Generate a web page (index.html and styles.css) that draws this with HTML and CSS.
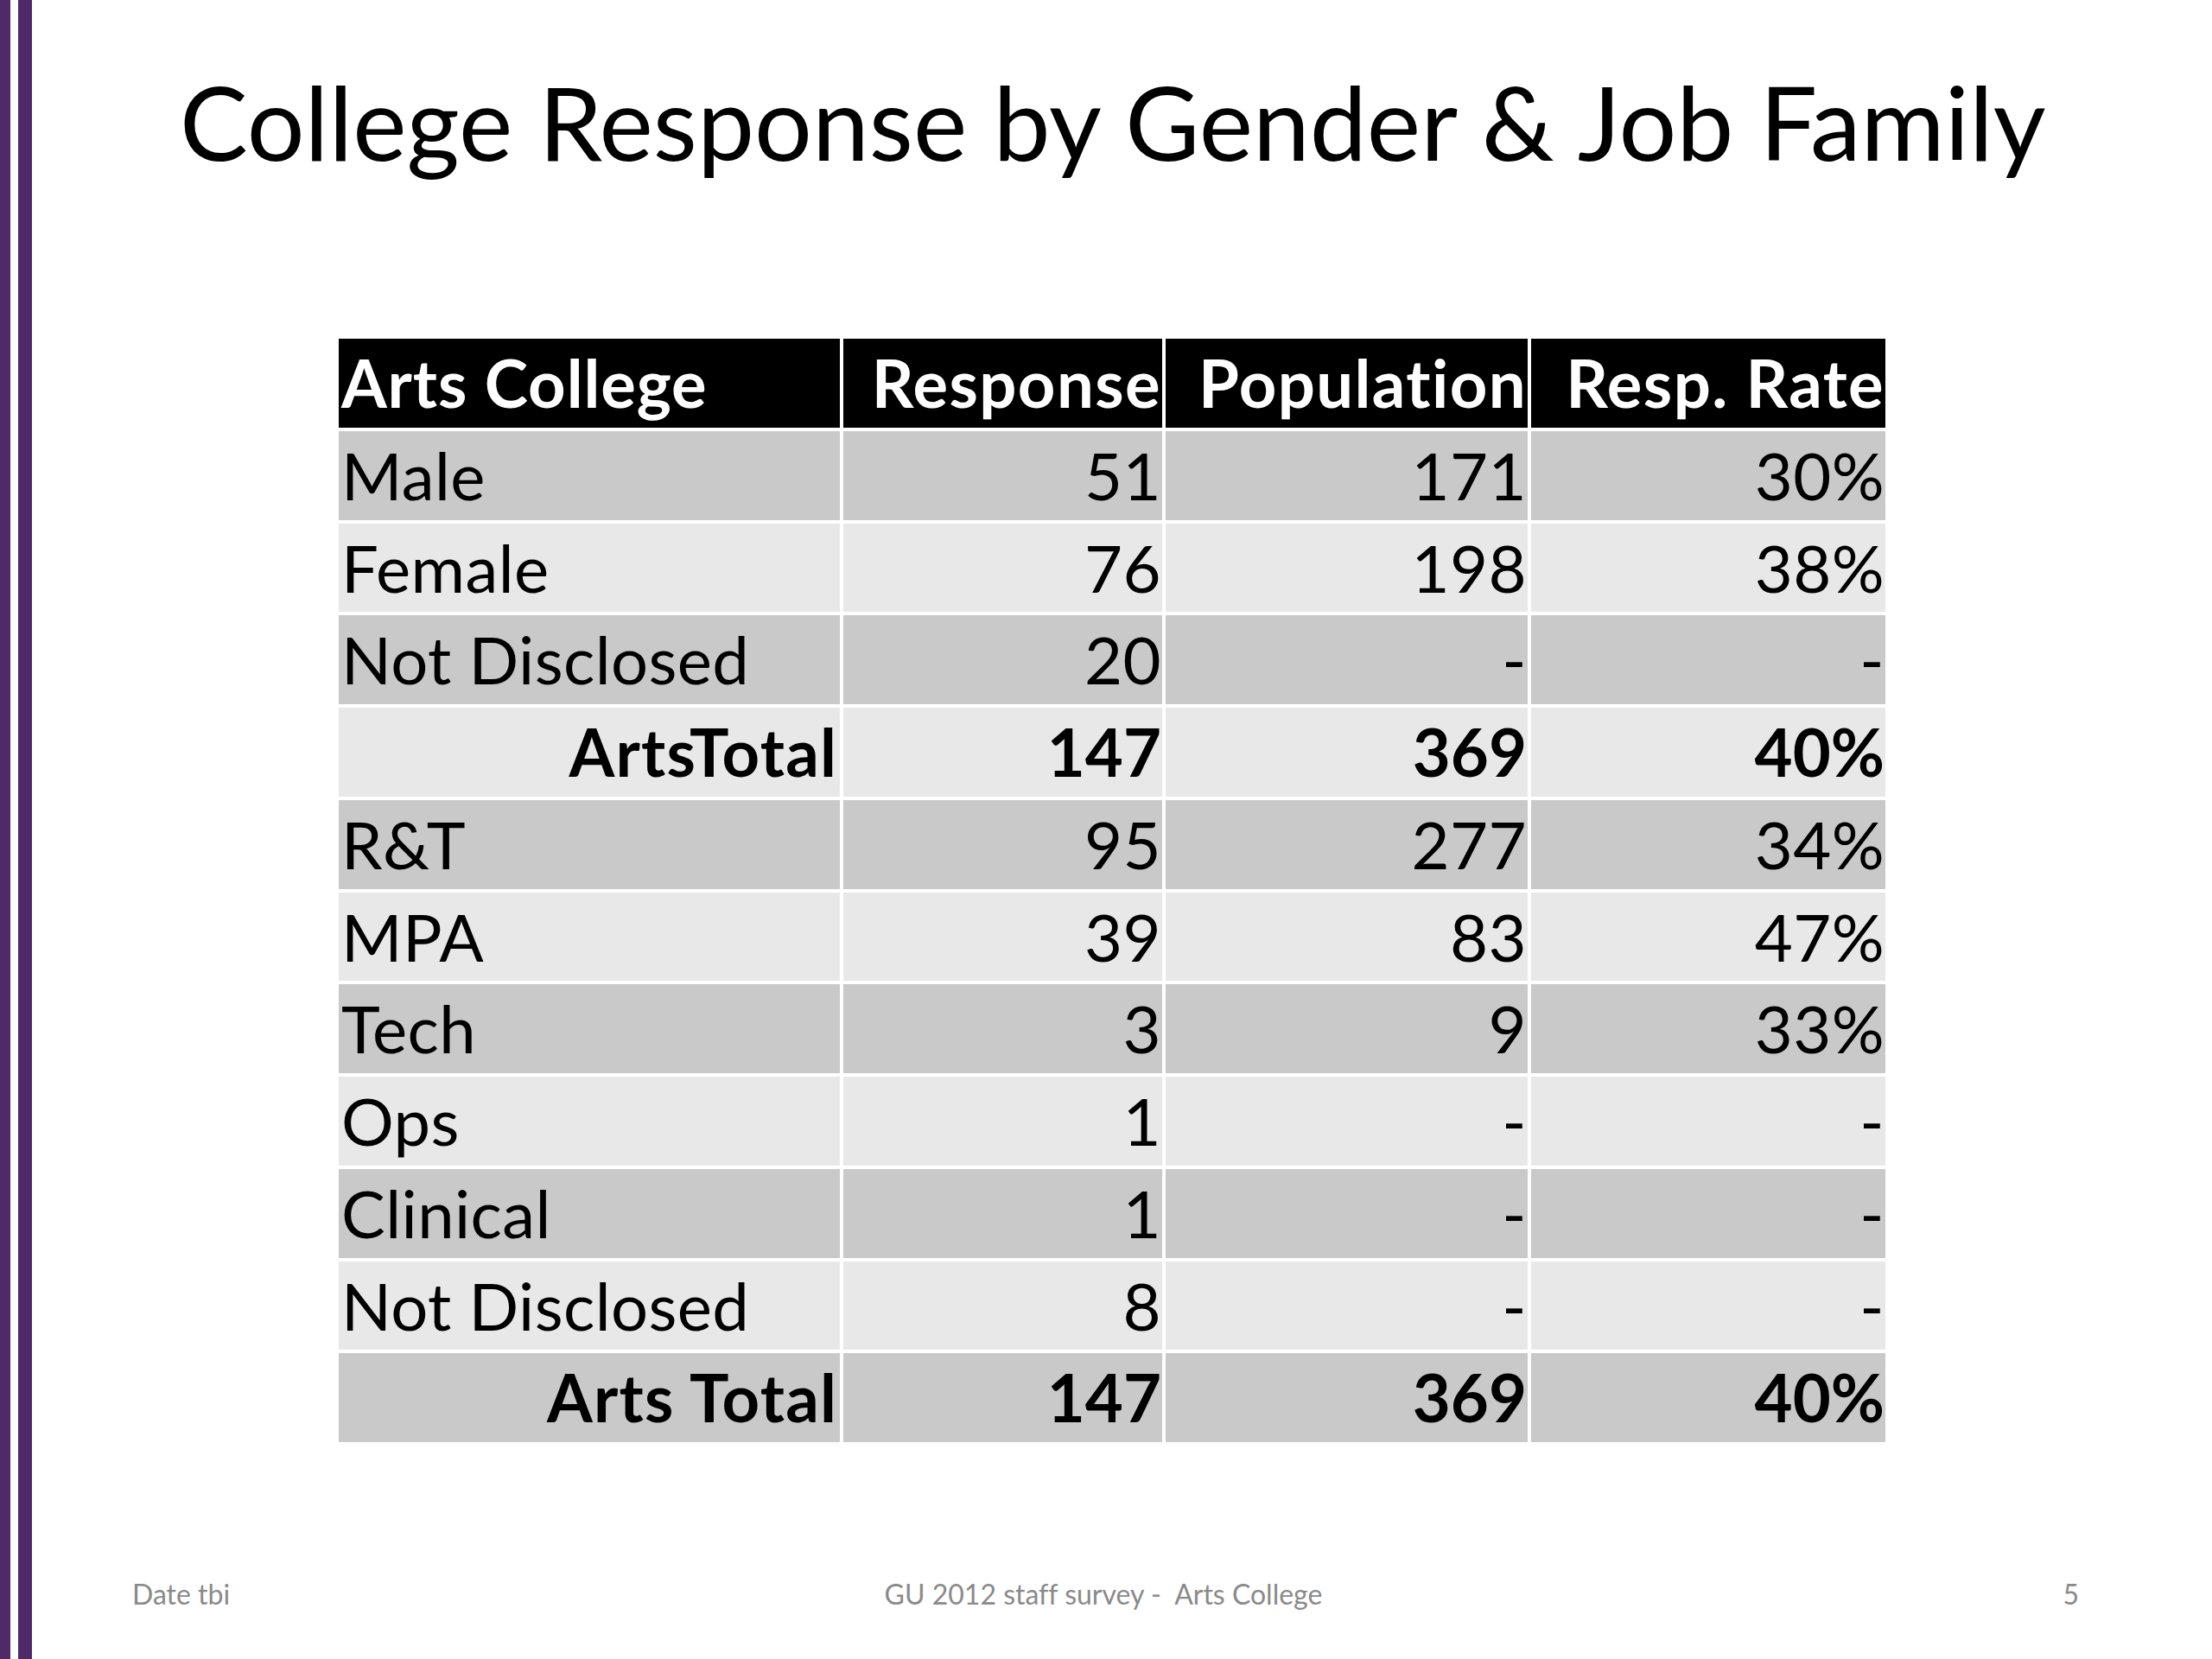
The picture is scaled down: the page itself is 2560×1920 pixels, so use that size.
FILE: index.html
```html
<!DOCTYPE html>
<html lang="en">
<head>
<meta charset="utf-8">
<title>College Response by Gender &amp; Job Family</title>
<link rel="stylesheet" href="styles.css">
</head>
<body>
<div class="slide">
  <div class="rail">
    <div class="bar bar-outer"></div>
    <div class="bar bar-inner"></div>
  </div>
  <div class="content">
    <h1 class="title">College Response by Gender &amp; Job Family</h1>
    <table class="data">
      <colgroup>
        <col class="c1"><col class="c2"><col class="c3"><col class="c4">
      </colgroup>
      <thead>
        <tr class="head">
          <th class="label">Arts College</th>
          <th class="num">Response</th>
          <th class="num">Population</th>
          <th class="num">Resp. Rate</th>
        </tr>
      </thead>
      <tbody>
        <tr class="dark"><td class="label">Male</td><td class="num">51</td><td class="num">171</td><td class="num">30%</td></tr>
        <tr class="light"><td class="label">Female</td><td class="num">76</td><td class="num">198</td><td class="num">38%</td></tr>
        <tr class="dark"><td class="label">Not Disclosed</td><td class="num">20</td><td class="num">-</td><td class="num">-</td></tr>
        <tr class="light total"><td class="label">ArtsTotal</td><td class="num">147</td><td class="num">369</td><td class="num">40%</td></tr>
        <tr class="dark"><td class="label">R&amp;T</td><td class="num">95</td><td class="num">277</td><td class="num">34%</td></tr>
        <tr class="light"><td class="label">MPA</td><td class="num">39</td><td class="num">83</td><td class="num">47%</td></tr>
        <tr class="dark"><td class="label">Tech</td><td class="num">3</td><td class="num">9</td><td class="num">33%</td></tr>
        <tr class="light"><td class="label">Ops</td><td class="num">1</td><td class="num">-</td><td class="num">-</td></tr>
        <tr class="dark"><td class="label">Clinical</td><td class="num">1</td><td class="num">-</td><td class="num">-</td></tr>
        <tr class="light"><td class="label">Not Disclosed</td><td class="num">8</td><td class="num">-</td><td class="num">-</td></tr>
        <tr class="dark total"><td class="label">Arts Total</td><td class="num">147</td><td class="num">369</td><td class="num">40%</td></tr>
      </tbody>
    </table>
    <footer class="footer">
      <div class="foot-date">Date tbi</div>
      <div class="foot-mid">GU 2012 staff survey -&nbsp; Arts College</div>
      <div class="foot-num">5</div>
    </footer>
  </div>
</div>
</body>
</html>
```

FILE: styles.css
```css
html, body {
  margin: 0;
  padding: 0;
  background: #ffffff;
}

body {
  width: 2560px;
  height: 1920px;
  overflow: hidden;
  font-family: Lato, "Open Sans", "Liberation Sans", sans-serif;
  font-variant-ligatures: none;
  font-feature-settings: "liga" 0, "clig" 0;
  color: #000000;
}

.slide {
  display: flex;
  width: 2560px;
  height: 1920px;
}

.rail {
  display: flex;
  gap: 9px;
  width: 37px;
  flex: 0 0 37px;
}

.bar {
  height: 100%;
  background: #4f2a68;
}

.bar-outer {
  width: 12px;
}

.bar-inner {
  width: 16px;
}

.content {
  flex: 1;
  display: flex;
  flex-direction: column;
  box-sizing: border-box;
  padding-top: 70px;
  padding-bottom: 55px;
}

.title {
  margin: 0;
  padding-left: 171px;
  font-weight: 400;
  font-size: 118px;
  line-height: 142px;
  white-space: nowrap;
  letter-spacing: 0;
}

.data {
  margin-top: 176px;
  margin-left: 351px;
  width: 1798px;
  table-layout: fixed;
  border-collapse: separate;
  border-spacing: 4px;
  font-size: 76px;
  letter-spacing: 0.4px;
}

.c1 { width: 580px; }
.c2 { width: 369px; }
.c3 { width: 419px; }
.c4 { width: 410px; }

.data th,
.data td {
  padding: 0 3px;
  height: 102.75px;
  line-height: 102.75px;
  white-space: nowrap;
  overflow: visible;
}

.data th {
  font-weight: 700;
  letter-spacing: 1.4px;
}

.data th.label {
  letter-spacing: 0.9px;
}

.head th {
  background: #000000;
  color: #ffffff;
}

.label {
  text-align: left;
}

.data .num {
  text-align: right;
  padding-right: 1px;
}

.dark td {
  background: #c9c9c9;
}

.light td {
  background: #e8e8e8;
}

.total td {
  font-weight: 700;
  letter-spacing: 0;
}

.total .label {
  text-align: right;
  letter-spacing: 1.2px;
}

.footer {
  margin-top: auto;
  display: flex;
  padding-left: 116px;
  font-size: 32px;
  line-height: 40px;
  color: #8a8a8a;
}

.foot-date {
  width: 724px;
  text-align: left;
}

.foot-mid {
  width: 800px;
  text-align: center;
  white-space: nowrap;
}

.foot-num {
  width: 729px;
  text-align: right;
}
```
